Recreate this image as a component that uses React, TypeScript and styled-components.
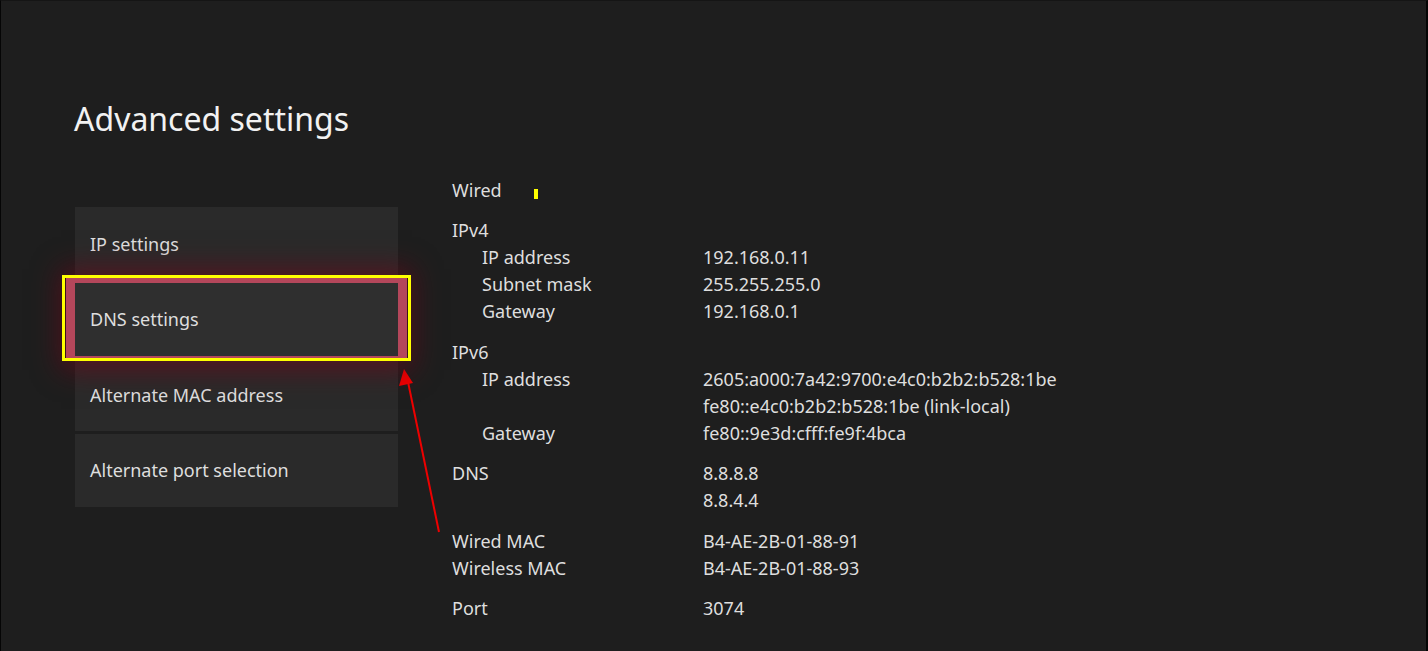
import React from 'react';
import styled, { createGlobalStyle } from 'styled-components';

const GlobalStyle = createGlobalStyle`
  html, body {
    margin: 0;
    padding: 0;
    background: #1e1e1e;
  }
  * {
    box-sizing: border-box;
  }
`;

const Screen = styled.div`
  position: relative;
  width: 1428px;
  height: 651px;
  background: #1e1e1e;
  border-left: 1px solid #050505;
  border-right: 2px solid #050505;
  border-top: 1px solid #151515;
  font-family: "Noto Sans", "Open Sans", sans-serif;
  color: #dedede;
  overflow: hidden;
`;

const Title = styled.h1`
  margin: 0;
  padding: 98px 0 0 73px;
  font-size: 32px;
  line-height: 40px;
  font-weight: 400;
  color: #f2f2f2;
`;

const Content = styled.div`
  display: flex;
  margin-top: 37px;
  padding-left: 74px;
`;

const Menu = styled.div`
  display: flex;
  flex-direction: column;
  gap: 2.5px;
  width: 323px;
  margin-top: 31px;
`;

type ItemProps = { $focused?: boolean };

const MenuItem = styled.div<ItemProps>`
  position: relative;
  display: flex;
  align-items: center;
  height: 73px;
  padding-left: 15px;
  font-size: 18px;
  background: ${p => (p.$focused ? '#2f2f2f' : '#2a2a2a')};
  box-shadow: ${p =>
    p.$focused
      ? '-4px 0 0 5px #b4475b, 4px 0 0 5px #b4475b, 0 0 26px 14px rgba(115, 5, 25, 0.6)'
      : 'none'};
  z-index: ${p => (p.$focused ? 1 : 0)};
`;

const Marker = styled.span`
  position: absolute;
  left: -13px;
  right: -13px;
  top: -8px;
  bottom: -5px;
  border: 3px solid #ffff00;
  pointer-events: none;
`;

const Details = styled.div`
  display: flex;
  flex-direction: column;
  gap: 13.5px;
  margin-left: 53px;
  font-size: 18px;
`;

const Section = styled.div`
  display: grid;
  grid-template-columns: 252px auto;
  grid-auto-rows: 27px;
  align-items: center;
`;

const Label = styled.div<{ $indent?: boolean }>`
  padding-left: ${p => (p.$indent ? '31px' : '1px')};
  white-space: nowrap;
`;

const Value = styled.div`
  white-space: nowrap;
`;

const Caret = styled.span`
  display: inline-block;
  width: 4px;
  height: 10px;
  margin-left: 32px;
  background: #ffff00;
  vertical-align: -2px;
`;

const Arrow = styled.svg`
  position: absolute;
  left: 390px;
  top: 360px;
  overflow: visible;
`;

type Row = { label: string; value?: string; indent?: boolean };

const sections: Row[][] = [
  [
    { label: 'IPv4' },
    { label: 'IP address', value: '192.168.0.11', indent: true },
    { label: 'Subnet mask', value: '255.255.255.0', indent: true },
    { label: 'Gateway', value: '192.168.0.1', indent: true },
  ],
  [
    { label: 'IPv6' },
    { label: 'IP address', value: '2605:a000:7a42:9700:e4c0:b2b2:b528:1be', indent: true },
    { label: '', value: 'fe80::e4c0:b2b2:b528:1be (link-local)', indent: true },
    { label: 'Gateway', value: 'fe80::9e3d:cfff:fe9f:4bca', indent: true },
  ],
  [
    { label: 'DNS', value: '8.8.8.8' },
    { label: '', value: '8.8.4.4' },
  ],
  [
    { label: 'Wired MAC', value: 'B4-AE-2B-01-88-91' },
    { label: 'Wireless MAC', value: 'B4-AE-2B-01-88-93' },
  ],
  [{ label: 'Port', value: '3074' }],
];

const menu = ['IP settings', 'DNS settings', 'Alternate MAC address', 'Alternate port selection'];

export default function App() {
  return (
    <>
      <GlobalStyle />
      <Screen>
        <Title>Advanced settings</Title>
        <Content>
          <Menu>
            {menu.map(m => (
              <MenuItem key={m} $focused={m === 'DNS settings'}>
                {m}
                {m === 'DNS settings' && <Marker />}
              </MenuItem>
            ))}
          </Menu>
          <Details>
            <Section>
              <Label>
                Wired
                <Caret />
              </Label>
              <Value />
            </Section>
            {sections.map((rows, i) => (
              <Section key={i}>
                {rows.map((r, j) => (
                  <React.Fragment key={j}>
                    <Label $indent={r.indent}>{r.label}</Label>
                    <Value>{r.value ?? ''}</Value>
                  </React.Fragment>
                ))}
              </Section>
            ))}
          </Details>
        </Content>
        <Arrow width="60" height="180" viewBox="0 0 60 180">
          <line x1="48" y1="171" x2="16" y2="16" stroke="#ee0000" strokeWidth="2" />
          <polygon points="13,8 8,25 22,22" fill="#ee0000" />
        </Arrow>
      </Screen>
    </>
  );
}
